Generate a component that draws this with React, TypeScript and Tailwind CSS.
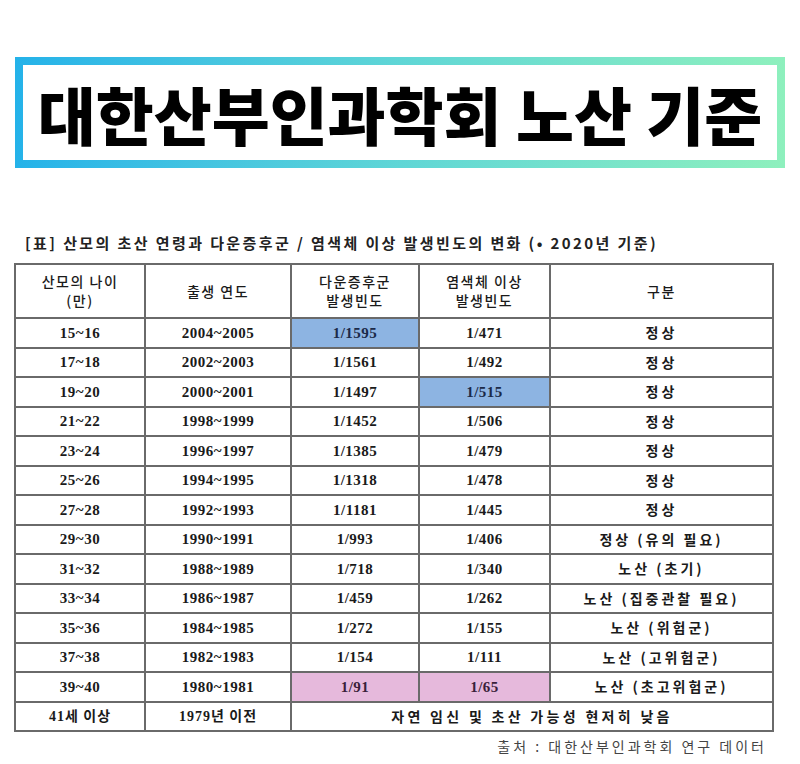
type Row = {
  age: string
  year: string
  down: string
  chromo: string
  label: string
  downHi?: "blue" | "pink"
  chromoHi?: "blue" | "pink"
}

const rows: Row[] = [
  { age: "15~16", year: "2004~2005", down: "1/1595", chromo: "1/471", label: "정상", downHi: "blue" },
  { age: "17~18", year: "2002~2003", down: "1/1561", chromo: "1/492", label: "정상" },
  { age: "19~20", year: "2000~2001", down: "1/1497", chromo: "1/515", label: "정상", chromoHi: "blue" },
  { age: "21~22", year: "1998~1999", down: "1/1452", chromo: "1/506", label: "정상" },
  { age: "23~24", year: "1996~1997", down: "1/1385", chromo: "1/479", label: "정상" },
  { age: "25~26", year: "1994~1995", down: "1/1318", chromo: "1/478", label: "정상" },
  { age: "27~28", year: "1992~1993", down: "1/1181", chromo: "1/445", label: "정상" },
  { age: "29~30", year: "1990~1991", down: "1/993", chromo: "1/406", label: "정상 (유의 필요)" },
  { age: "31~32", year: "1988~1989", down: "1/718", chromo: "1/340", label: "노산 (초기)" },
  { age: "33~34", year: "1986~1987", down: "1/459", chromo: "1/262", label: "노산 (집중관찰 필요)" },
  { age: "35~36", year: "1984~1985", down: "1/272", chromo: "1/155", label: "노산 (위험군)" },
  { age: "37~38", year: "1982~1983", down: "1/154", chromo: "1/111", label: "노산 (고위험군)" },
  { age: "39~40", year: "1980~1981", down: "1/91", chromo: "1/65", label: "노산 (초고위험군)", downHi: "pink", chromoHi: "pink" },
]

const cell = "border-2 border-[#6a6a6a] text-center align-middle p-0"

function hiClass(hi?: "blue" | "pink") {
  if (hi === "blue") return "bg-[#8db4e2] text-[#1b2a48]"
  if (hi === "pink") return "bg-[#e6b9dc] text-[#3a1f3a]"
  return ""
}

export default function App() {
  return (
    <div className="bg-white w-[800px] h-[764px] pt-[57px] font-['Liberation_Serif','Noto_Sans_CJK_KR',serif] text-[#1a1a1a]">
      {/* title */}
      <div className="mx-[15px] w-[770px] h-[111px] p-2 bg-gradient-to-r from-[#24b2e9] via-[#5fd6d6] to-[#8ef0bd]">
        <div className="h-full bg-white flex items-center justify-center">
          <h1 className="font-['Noto_Sans_CJK_KR',sans-serif] font-black text-[63px] leading-none text-black">
            대한산부인과학회 노산 기준
          </h1>
        </div>
      </div>

      {/* caption */}
      <p className="mt-[66px] ml-[25px] text-[15px] leading-[18px] font-bold tracking-[2.4px] text-[#222] font-['Noto_Sans_CJK_KR',sans-serif]">
        [표] 산모의 초산 연령과 다운증후군 / 염색체 이상 발생빈도의 변화 (• 2020년 기준)
      </p>

      <table className="mt-[11px] ml-[14px] w-[758px] border-collapse table-fixed text-[15px] font-bold tracking-[0.5px]">
        <colgroup>
          <col className="w-[130px]" />
          <col className="w-[146px]" />
          <col className="w-[128px]" />
          <col className="w-[131px]" />
          <col className="w-[223px]" />
        </colgroup>
        <thead>
          <tr className="h-[54px] font-['Noto_Sans_CJK_KR',sans-serif] text-[14px] leading-[19px] tracking-[1.5px]">
            <th className={cell + " font-medium"}>
              산모의 나이
              <br />
              (만)
            </th>
            <th className={cell + " font-medium"}>출생 연도</th>
            <th className={cell + " font-medium"}>
              다운증후군
              <br />
              발생빈도
            </th>
            <th className={cell + " font-medium"}>
              염색체 이상
              <br />
              발생빈도
            </th>
            <th className={cell + " font-medium"}>구분</th>
          </tr>
        </thead>
        <tbody>
          {rows.map(r => (
            <tr key={r.age} className="h-[29.5px]">
              <td className={cell}>{r.age}</td>
              <td className={cell}>{r.year}</td>
              <td className={cell + " " + hiClass(r.downHi)}>{r.down}</td>
              <td className={cell + " " + hiClass(r.chromoHi)}>{r.chromo}</td>
              <td className={cell + " font-['Noto_Sans_CJK_KR',sans-serif] font-semibold text-[14px] tracking-[3px]"}>
                {r.label}
              </td>
            </tr>
          ))}
          <tr className="h-[29.5px]">
            <td className={cell + " text-[14px] tracking-[1px]"}>41세 이상</td>
            <td className={cell + " text-[14px] tracking-[1px]"}>1979년 이전</td>
            <td
              colSpan={3}
              className={cell + " font-['Noto_Sans_CJK_KR',sans-serif] font-semibold text-[14px] tracking-[3.3px]"}
            >
              자연 임신 및 초산 가능성 현저히 낮음
            </td>
          </tr>
        </tbody>
      </table>

      {/* source */}
      <p className="mt-[4px] w-[767px] text-right text-[14px] leading-[20px] tracking-[3px] text-[#444] font-['Noto_Sans_CJK_KR',sans-serif]">
        출처 : 대한산부인과학회 연구 데이터
      </p>
    </div>
  )
}
